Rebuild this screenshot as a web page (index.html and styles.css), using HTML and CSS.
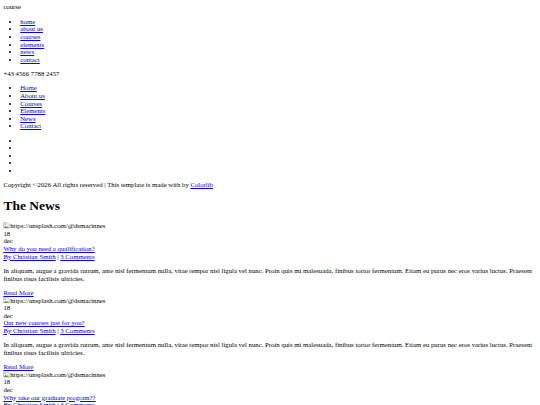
FILE: index.html
```html
<!DOCTYPE html>
<html class="page">
<head>
<meta charset="utf-8">
<title>Course - News</title>
<link rel="stylesheet" href="styles.css">
</head>
<body class="site">
<header class="header">
  <div class="logo">course</div>
  <ul class="menu">
    <li><a href="#">home</a></li>
    <li><a href="#">about us</a></li>
    <li><a href="#">courses</a></li>
    <li><a href="#">elements</a></li>
    <li><a href="#">news</a></li>
    <li><a href="#">contact</a></li>
  </ul>
  <div class="phone">+43 4566 7788 2457</div>
</header>
<nav class="mobile-nav">
  <ul class="menu">
    <li><a href="#">Home</a></li>
    <li><a href="#">About us</a></li>
    <li><a href="#">Courses</a></li>
    <li><a href="#">Elements</a></li>
    <li><a href="#">News</a></li>
    <li><a href="#">Contact</a></li>
  </ul>
  <ul class="social">
    <li></li>
    <li></li>
    <li></li>
    <li></li>
    <li></li>
  </ul>
  <div class="copyright">Copyright &copy;2026 All rights reserved | This template is made with  by <a href="#">Colorlib</a></div>
</nav>
<main class="news">
  <h1 class="news-title">The News</h1>
  <div class="news-list">
    <div class="news-item">
      <div class="thumb"><svg class="broken" viewBox="0 0 16 16" width="16" height="16"><path d="M1.5 1.5h9l4 4v9h-13z" fill="#f4f4f4" stroke="#8a8a8a"/><path d="M2 14l4-5 3 3 2-2 3 4z" fill="#5a9e4a"/><circle cx="5" cy="5" r="1.5" fill="#4a7fc0"/></svg>https://unsplash.com/@dsmacinnes</div>
      <div class="date">18</div>
      <div class="month">dec</div>
      <div class="item-title"><a href="#">Why do you need a qualification?</a></div>
      <div class="meta"><a href="#">By Christian Smith</a> | <a href="#">3 Comments</a></div>
      <p class="text">In aliquam, augue a gravida rutrum, ante nisl fermentum nulla, vitae tempor nisl ligula vel nunc. Proin quis mi malesuada, finibus tortor fermentum. Etiam eu purus nec eros varius luctus. Praesent finibus risus facilisis ultricies.</p>
      <div class="more"><a href="#">Read More</a></div>
    </div>
    <div class="news-item">
      <div class="thumb"><svg class="broken" viewBox="0 0 16 16" width="16" height="16"><path d="M1.5 1.5h9l4 4v9h-13z" fill="#f4f4f4" stroke="#8a8a8a"/><path d="M2 14l4-5 3 3 2-2 3 4z" fill="#5a9e4a"/><circle cx="5" cy="5" r="1.5" fill="#4a7fc0"/></svg>https://unsplash.com/@dsmacinnes</div>
      <div class="date">18</div>
      <div class="month">dec</div>
      <div class="item-title"><a href="#">Our new courses just for you?</a></div>
      <div class="meta"><a href="#">By Christian Smith</a> | <a href="#">3 Comments</a></div>
      <p class="text">In aliquam, augue a gravida rutrum, ante nisl fermentum nulla, vitae tempor nisl ligula vel nunc. Proin quis mi malesuada, finibus tortor fermentum. Etiam eu purus nec eros varius luctus. Praesent finibus risus facilisis ultricies.</p>
      <div class="more"><a href="#">Read More</a></div>
    </div>
    <div class="news-item">
      <div class="thumb"><svg class="broken" viewBox="0 0 16 16" width="16" height="16"><path d="M1.5 1.5h9l4 4v9h-13z" fill="#f4f4f4" stroke="#8a8a8a"/><path d="M2 14l4-5 3 3 2-2 3 4z" fill="#5a9e4a"/><circle cx="5" cy="5" r="1.5" fill="#4a7fc0"/></svg>https://unsplash.com/@dsmacinnes</div>
      <div class="date">18</div>
      <div class="month">dec</div>
      <div class="item-title"><a href="#">Why take our graduate program??</a></div>
      <div class="meta"><a href="#">By Christian Smith</a> | <a href="#">3 Comments</a></div>
      <p class="text">In aliquam, augue a gravida rutrum, ante nisl fermentum nulla, vitae tempor nisl ligula vel nunc. Proin quis mi malesuada, finibus tortor fermentum. Etiam eu purus nec eros varius luctus. Praesent finibus risus facilisis ultricies.</p>
      <div class="more"><a href="#">Read More</a></div>
    </div>
  </div>
</main>
</body>
</html>
```
FILE: styles.css
```css
.page {
  zoom: 0.421875;
}
.site {
  margin: 8px;
  font-family: "Liberation Serif", "Times New Roman", serif;
  font-size: 16px;
  line-height: 1.125;
  color: #000;
  background: #fff;
}
.site a {
  color: #0000ee;
}
.menu,
.social {
  margin: 16px 0;
  padding-left: 40px;
}
.news-title {
  font-size: 32px;
  font-weight: bold;
  margin: 21.44px 0;
}
.thumb {
  color: #000;
}
.broken {
  vertical-align: -2px;
}
.text {
  margin: 16px 0;
}
```
